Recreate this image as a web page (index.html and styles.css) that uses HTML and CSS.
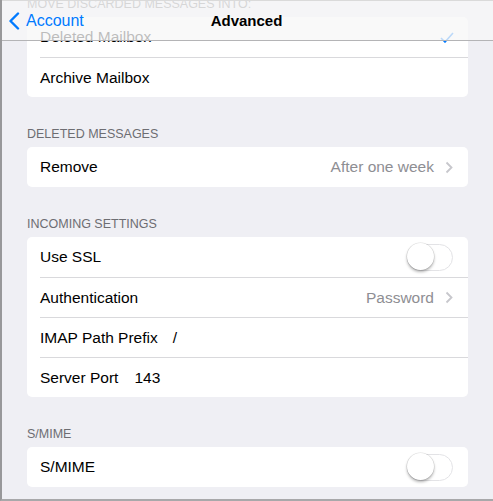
FILE: index.html
```html
<!DOCTYPE html>
<html>
<head>
<meta charset="utf-8">
<link rel="stylesheet" href="styles.css">
</head>
<body>
<div class="screen">
  <div class="content">
    <div class="section-header">MOVE DISCARDED MESSAGES INTO:</div>
    <div class="card">
      <div class="row"><span class="label">Deleted Mailbox</span>
        <svg class="check" width="14" height="11" viewBox="0 0 14 11"><path d="M1 6 L5 10 L13 1" fill="none" stroke="#007aff" stroke-width="1.6"/></svg>
      </div>
      <div class="row"><span class="label">Archive Mailbox</span></div>
    </div>

    <div class="section-header">DELETED MESSAGES</div>
    <div class="card">
      <div class="row"><span class="label">Remove</span><span class="spacer"></span><span class="value">After one week</span>
        <svg class="chev" width="8" height="13" viewBox="0 0 8 13"><path d="M1.5 1.5 L6.5 6.5 L1.5 11.5" fill="none" stroke="#c7c7cc" stroke-width="1.8"/></svg>
      </div>
    </div>

    <div class="section-header">INCOMING SETTINGS</div>
    <div class="card">
      <div class="row"><span class="label">Use SSL</span><span class="spacer"></span><span class="toggle"><span class="knob"></span></span></div>
      <div class="row"><span class="label">Authentication</span><span class="spacer"></span><span class="value">Password</span>
        <svg class="chev" width="8" height="13" viewBox="0 0 8 13"><path d="M1.5 1.5 L6.5 6.5 L1.5 11.5" fill="none" stroke="#c7c7cc" stroke-width="1.8"/></svg>
      </div>
      <div class="row"><span class="label">IMAP Path Prefix</span><span class="field field-prefix">/</span></div>
      <div class="row"><span class="label">Server Port</span><span class="field field-port">143</span></div>
    </div>

    <div class="section-header">S/MIME</div>
    <div class="card">
      <div class="row"><span class="label">S/MIME</span><span class="spacer"></span><span class="toggle"><span class="knob"></span></span></div>
    </div>
  </div>

  <div class="navbar">
    <div class="back">
      <svg width="12" height="18" viewBox="0 0 12 18"><path d="M10 1.5 L2.5 9 L10 16.5" fill="none" stroke="#007aff" stroke-width="2.4" stroke-linecap="round" stroke-linejoin="round"/></svg>
      <span>Account</span>
    </div>
    <div class="title">Advanced</div>
  </div>
</div>
</body>
</html>
```
FILE: styles.css
```css
html, body {
  margin: 0;
  padding: 0;
}
body {
  font-family: "Liberation Sans", Arial, sans-serif;
  background: #efeff4;
}
.screen {
  position: relative;
  width: 493px;
  height: 501px;
  box-sizing: border-box;
  border-left: 2px solid #98989a;
  border-bottom: 2px solid #a8a8aa;
  background: #efeff4;
  overflow: hidden;
}
.content {
  margin-top: -33px;
  padding: 0 25px 0 25px;
}
.section-header {
  height: 50px;
  box-sizing: border-box;
  padding-top: 29px;
  line-height: 16px;
  font-size: 12.5px;
  color: #6d6d72;
}
.card {
  background: #fff;
  border-radius: 5px;
  overflow: hidden;
}
.row {
  height: 40px;
  box-sizing: border-box;
  margin-left: 13px;
  padding-right: 15px;
  display: flex;
  align-items: center;
  font-size: 15.5px;
  color: #000;
}
.row + .row {
  border-top: 1px solid #d9d9dc;
}
.spacer {
  flex: 1;
}
.value {
  color: #8e8e93;
}
.chev {
  margin-left: 11px;
}
.check {
  margin-left: auto;
  margin-right: -1px;
}
.field-prefix {
  margin-left: 15px;
}
.field-port {
  margin-left: 16px;
}
.toggle {
  position: relative;
  width: 46px;
  height: 27px;
  box-sizing: border-box;
  border: 1.5px solid #e3e3e6;
  border-radius: 14px;
  background: #fff;
}
.knob {
  position: absolute;
  left: -1.5px;
  top: -1.5px;
  width: 27px;
  height: 27px;
  border-radius: 50%;
  background: #fff;
  box-shadow: 0 2px 3px rgba(0,0,0,0.3), 0 0 0 0.5px rgba(0,0,0,0.12);
}
.navbar {
  position: absolute;
  top: 0;
  left: 0;
  right: 0;
  height: 41px;
  box-sizing: border-box;
  border-top: 1px solid #dadada;
  border-bottom: 1px solid #b4b4b6;
  background: rgba(247,247,247,0.76);
  display: flex;
  align-items: center;
  justify-content: center;
}
.back {
  position: absolute;
  left: 6px;
  top: 0;
  height: 39px;
  display: flex;
  align-items: center;
  gap: 6px;
  color: #007aff;
  font-size: 16px;
}
.back svg {
  display: block;
}
.title {
  font-size: 15px;
  font-weight: bold;
  color: #000;
  margin-right: 2px;
}
```
